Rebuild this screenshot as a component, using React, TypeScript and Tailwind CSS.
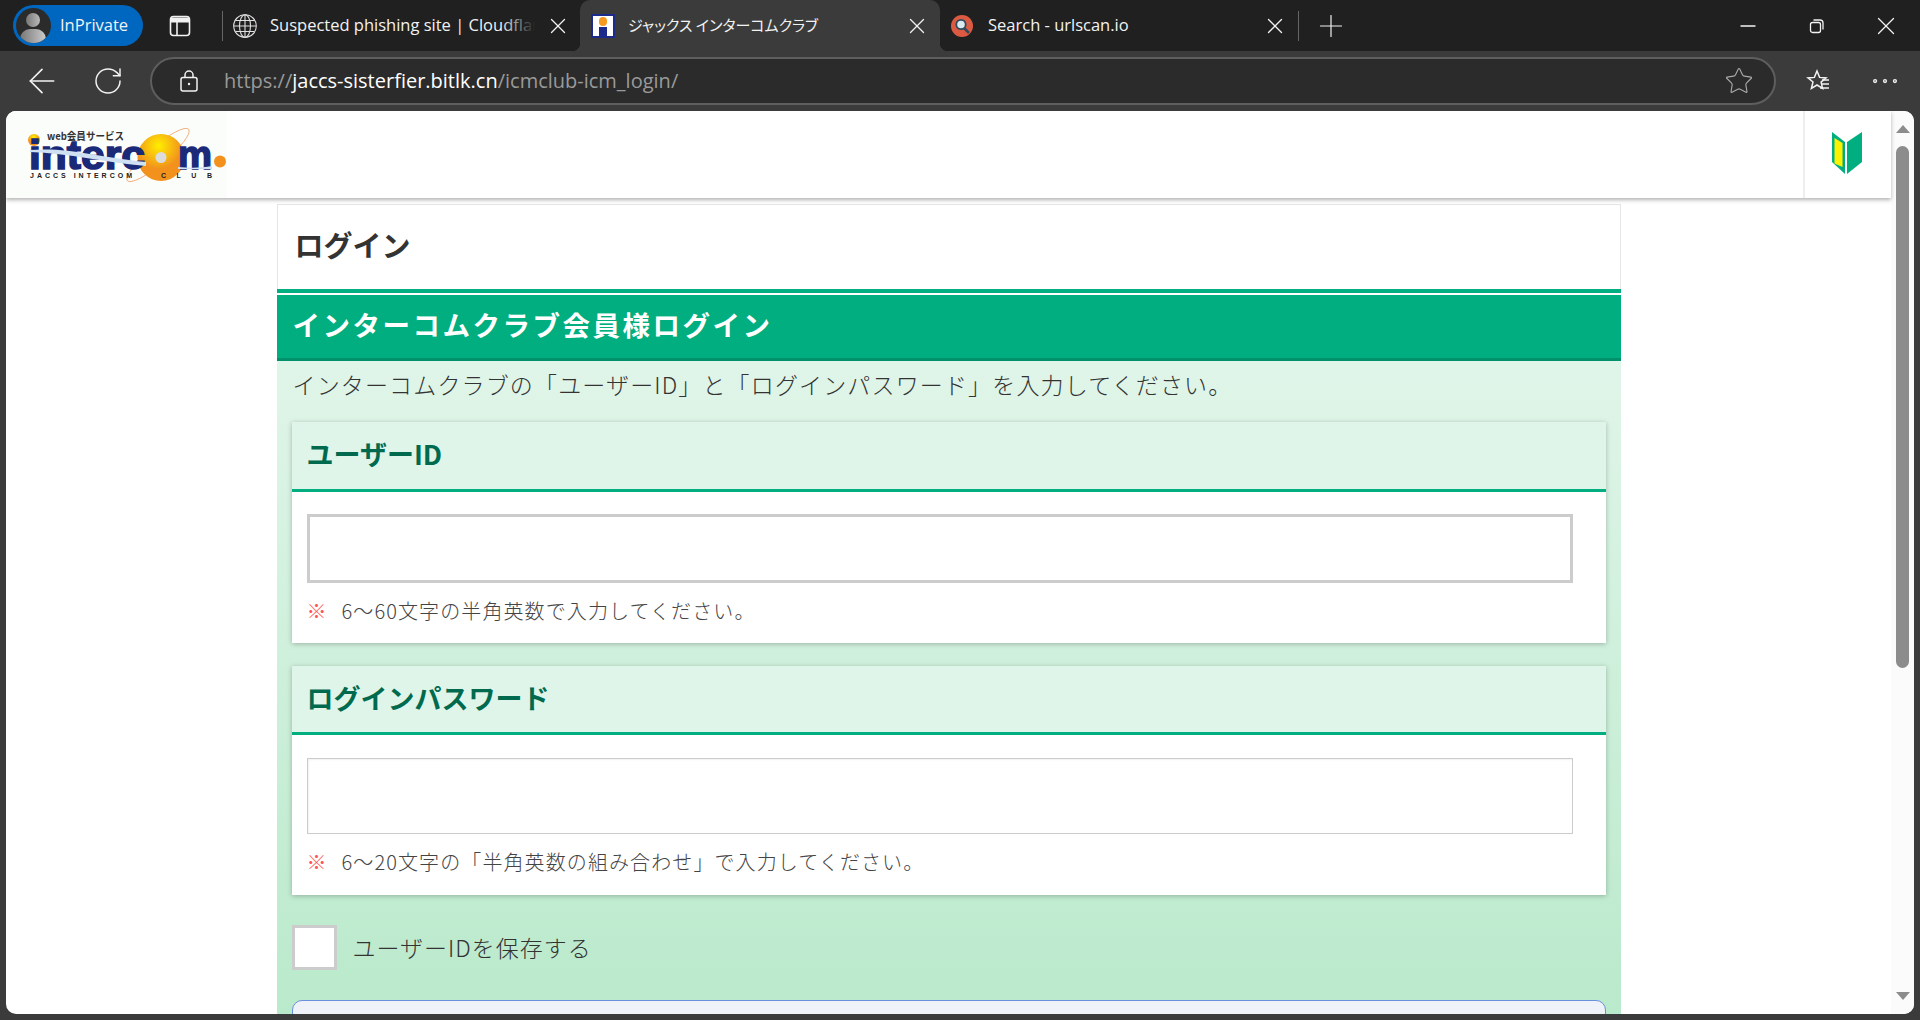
import { ArrowLeft, Ellipsis, Minus, Plus, RotateCw, Star, X } from 'lucide-react'

const cjk = 'font-["Noto_Sans_CJK_JP","Noto_Sans",sans-serif]'

function SidebarIcon() {
  return (
    <svg width="22" height="22" viewBox="0 0 22 22" fill="none" stroke="#f2f2f2" strokeWidth="1.6">
      <rect x="1.500" y="1.500" width="19" height="19" rx="3" />
      <path d="M2 5h18" strokeWidth="5" />
      <path d="M8 7v13" />
    </svg>
  )
}

function GlobeIcon() {
  return (
    <svg width="24" height="24" viewBox="0 0 24 24" fill="none" stroke="#e0e0e0" strokeWidth="1.100">
      <circle cx="12" cy="12" r="11.300" />
      <ellipse cx="12" cy="12" rx="5.500" ry="11.300" />
      <path d="M12 1v22M1 12h22M2.500 6.500h19M2.500 17.500h19" />
    </svg>
  )
}

function LockIcon() {
  return (
    <svg width="18" height="22" viewBox="0 0 18 22" fill="none" stroke="#f2f2f2" strokeWidth="1.500">
      <rect x="1" y="7.500" width="16" height="13.500" rx="2" />
      <path d="M5 7.500V5a4 4 0 0 1 8 0v2.500" />
      <circle cx="9" cy="14" r="1.200" fill="#f2f2f2" stroke="none" />
    </svg>
  )
}

function RestoreIcon() {
  return (
    <svg width="16" height="16" viewBox="0 0 16 16" fill="none" stroke="#f2f2f2" strokeWidth="1.3">
      <rect x="1.500" y="4.500" width="10" height="10" rx="2" />
      <path d="M4.500 2h6.500a3 3 0 0 1 3 3v6.500" />
    </svg>
  )
}

function FavoritesIcon() {
  return (
    <svg width="26" height="26" viewBox="0 0 26 26" fill="none" stroke="#f2f2f2" strokeWidth="1.5">
      <path d="M12 3l2.600 6.400 6.400.5-4.900 4.200 1.500 6.400L12 17l-5.600 3.500L8 14 3 9.900l6.400-.5z" />
      <path d="M17 12h7M17 16h7M15 20h9" />
    </svg>
  )
}

function CloseIcon() {
  return <X size={26} strokeWidth={1.2} className="shrink-0" />
}

function TabFavicon() {
  return (
    <div className="flex h-[24px] w-[24px] flex-col items-center border-2 border-[#1c2a8c] bg-white">
      <div className="mt-[1px] h-[9px] w-[8px] rounded-full bg-[#f59a1e]" />
      <div className="mt-auto h-[9px] w-[8px] bg-[#1c2a8c]" />
    </div>
  )
}

function UrlscanFavicon() {
  return (
    <svg width="22" height="22" viewBox="0 0 22 22">
      <circle cx="11" cy="11" r="11" fill="#dc5a42" />
      <path d="M13 13l5 5" stroke="#2f4a5c" strokeWidth="2.500" />
      <circle cx="10" cy="9.500" r="4.700" fill="#dce8ef" stroke="#2f4a5c" strokeWidth="1.800" />
    </svg>
  )
}

function Logo() {
  return (
    <svg width="204" height="62" viewBox="0 0 204 62" className="shrink-0">
      <defs>
        <radialGradient id="ball" cx="0.45" cy="0.25" r="0.7">
          <stop offset="0" stopColor="#ffee00" />
          <stop offset="0.7" stopColor="#f2921d" />
        </radialGradient>
      </defs>
      <circle cx="6" cy="15" r="6" fill="url(#ball)" />
      <text x="19" y="14.500" fontSize="10.500" fontWeight="700" fill="#333" fontFamily="Noto Sans CJK JP" textLength="77" lengthAdjust="spacingAndGlyphs">
        web会員サービス
      </text>
      <ellipse cx="130" cy="30" rx="40" ry="9" fill="none" stroke="#f2a36b" strokeWidth="0.8" transform="rotate(-40 130 30)" />
      <circle cx="133" cy="32.500" r="23.500" fill="url(#ball)" />
      <circle cx="133" cy="32.500" r="5.500" fill="#dcdcdc" />
      <text x="1" y="44" fontSize="40" fontWeight="700" fill="#1b2a78" stroke="#1b2a78" strokeWidth="1.600" fontFamily="Liberation Sans" textLength="116" lengthAdjust="spacingAndGlyphs">
        interc
      </text>
      <text x="150" y="44" fontSize="40" fontWeight="700" fill="#1b2a78" stroke="#1b2a78" strokeWidth="1.600" fontFamily="Liberation Sans" textLength="34" lengthAdjust="spacingAndGlyphs">
        m
      </text>
      <path d="M2 25C40 22 70 32 118 37L118 41C80 38 40 28 2 27z" fill="#cfe0f2" />
      <path d="M150 42c12 1 24 1 34-1v3h-34z" fill="#cfe0f2" />
      <circle cx="192" cy="36.500" r="6" fill="#f2921d" />
      <text x="2" y="52.500" fontSize="7" fontWeight="700" fill="#222" fontFamily="Liberation Sans" textLength="102" lengthAdjust="spacing">
        JACCS INTERCOM
      </text>
      <text x="133" y="52.500" fontSize="7" fontWeight="700" fill="#222" fontFamily="Liberation Sans" textLength="51" lengthAdjust="spacing">
        CLUB
      </text>
    </svg>
  )
}

function BeginnerMark() {
  return (
    <svg width="30" height="42" viewBox="0 0 30 42">
      <path d="M0 0l13 10v32L0 30z" fill="#00ae7f" />
      <path d="M2.500 6l8 5v24l-8-3.500z" fill="#fff200" />
      <path d="M15 10L30 0v30l-15 12z" fill="#00ae7f" />
    </svg>
  )
}

function Note({ text }: { text: string }) {
  return (
    <p className="flex items-center gap-[15px] text-[20px] leading-[28px] font-light text-[#444]">
      <span className="text-[#f55]">※</span>
      <span className="tracking-[1.100px]">{text}</span>
    </p>
  )
}

function FieldCard({ title, headerHeight, children }: { title: string; headerHeight: string; children: React.ReactNode }) {
  return (
    <section className="bg-white shadow-[0_1px_5px_rgba(0,0,0,0.25)]">
      <h2 className={`flex ${headerHeight} items-center border-b-[3px] border-[#00ae7f] bg-[#e0f5e9] px-[15px] pb-[2px] text-[27px] font-bold text-[#006a4e]`}>
        {title}
      </h2>
      {children}
    </section>
  )
}

export default function App() {
  return (
    <div className={`flex h-screen flex-col overflow-hidden bg-[#3b3b3b] ${cjk}`}>
      {/* tab strip */}
      <div className='flex h-[51px] items-stretch bg-[#202020] font-["Open_Sans",sans-serif] text-[16.500px] text-[#f2f2f2]'>
        <div className="ml-[13px] mt-[5px] flex h-[41px] w-[130px] items-center rounded-full bg-[#0067c0] pl-[3px]">
          <div className="relative h-[35px] w-[35px] overflow-hidden rounded-full bg-[#2b2b2b]">
            <div className="absolute left-[10px] top-[5px] h-[14px] w-[14px] rounded-full bg-gradient-to-r from-[#777] to-[#bbb]" />
            <div className="absolute left-[4px] top-[21px] h-[20px] w-[26px] rounded-full bg-gradient-to-r from-[#777] to-[#ccc]" />
          </div>
          <span className="ml-[9px] text-[16.500px]">InPrivate</span>
        </div>
        <div className="ml-[26px] flex items-center">
          <SidebarIcon />
        </div>
        <div className="ml-[31px] mt-[11px] h-[30px] w-px bg-[#666]" />
        <div className="ml-[10px] flex w-[347px] items-center">
          <GlobeIcon />
          <div className="relative ml-[13px] w-[265px] overflow-hidden whitespace-nowrap">
            Suspected phishing site | Cloudflare
            <div className="absolute inset-y-0 right-0 w-[34px] bg-gradient-to-r from-transparent to-[#202020]" />
          </div>
          <div className="ml-[10px]">
            <CloseIcon />
          </div>
        </div>
        <div className="relative flex w-[360px] items-center rounded-t-[10px] bg-[#3b3b3b] pl-[11px]">
          <div className="absolute bottom-0 left-[-8px] h-[8px] w-[8px] bg-[radial-gradient(circle_at_0_0,#202020_8px,#3b3b3b_8.500px)]" />
          <div className="absolute bottom-0 right-[-8px] h-[8px] w-[8px] bg-[radial-gradient(circle_at_100%_0,#202020_8px,#3b3b3b_8.500px)]" />
          <TabFavicon />
          <span className={`ml-[13px] w-[276px] text-[15px] [font-feature-settings:"palt"] ${cjk}`}>ジャックス インターコムクラブ</span>
          <CloseIcon />
        </div>
        <div className="flex w-[358px] items-center pl-[11px]">
          <UrlscanFavicon />
          <span className="ml-[15px] w-[274px]">Search - urlscan.io</span>
          <CloseIcon />
        </div>
        <div className="mt-[11px] h-[30px] w-px bg-[#666]" />
        <div className="ml-[14px] flex items-center">
          <Plus size={36} strokeWidth={0.8} />
        </div>
        <div className="ml-auto flex items-center">
          <div className="flex w-[69px] justify-center">
            <Minus size={24} strokeWidth={1.4} />
          </div>
          <div className="flex w-[69px] justify-center">
            <RestoreIcon />
          </div>
          <div className="flex w-[69px] justify-center">
            <X size={30} strokeWidth={1} />
          </div>
        </div>
      </div>

      {/* toolbar */}
      <div className="flex h-[60px] items-center text-[#f2f2f2]">
        <ArrowLeft size={40} strokeWidth={1} className="ml-[22px]" />
        <RotateCw size={32} strokeWidth={1.1} className="ml-[30px]" />
        <div className="ml-[26px] flex h-[48px] w-[1626px] items-center rounded-full border-2 border-[#5e5e5e] bg-[#2b2b2b] pl-[28px] pr-[20px]">
          <LockIcon />
          <div className='ml-[26px] font-["Open_Sans",sans-serif] text-[20px] text-[#9a9a9a]'>
            https://<span className="text-white">jaccs-sisterfier.bitlk.cn</span>/icmclub-icm_login/
          </div>
          <Star size={30} strokeWidth={0.9} className="ml-auto text-[#aaa]" />
        </div>
        <div className="ml-[29px]">
          <FavoritesIcon />
        </div>
        <Ellipsis size={34} strokeWidth={1} className="ml-[37px]" />
      </div>

      {/* page */}
      <div className="mx-[6px] mb-[6px] flex min-h-0 flex-1 overflow-hidden rounded-[10px] bg-white">
        <div className="flex min-w-0 flex-1 flex-col">
          <header className="relative z-10 flex h-[87px] shrink-0 items-center justify-between bg-white shadow-[0_2px_4px_rgba(0,0,0,0.3)]">
            <div className="flex h-[87px] w-[221px] items-center bg-[#fbfdfb] pl-[22px] pt-[2px]">
              <Logo />
            </div>
            <div className="flex h-[87px] w-[88px] items-center justify-center border-l-2 border-[#eee] pb-[3px] pr-[2px]">
              <BeginnerMark />
            </div>
          </header>

          <main className="mx-auto mt-[6px] w-[1344px] flex-1">
            <div className="flex h-[85px] items-center border border-b-0 border-[#e5e5e5] pb-[5px] pl-[17px]">
              <h1 className="text-[29px] font-bold text-[#333]">ログイン</h1>
            </div>
            <div className="h-[4px] bg-[#00ae7f]" />
            <div className="mt-[2px] flex h-[66px] items-center border-b-[3px] border-[#00906a] bg-[#00ae7f] pb-[4px] pl-[16px] text-[27.500px] font-bold tracking-[2.500px] text-white">
              インターコムクラブ会員様ログイン
            </div>
            <div className="h-[680px] bg-gradient-to-b from-[#e0f5e9] to-[#b8e9ca] px-[15px]">
              <p className="flex h-[61px] items-center pb-[14px] pl-[1px] text-[23px] font-light tracking-[1.150px] text-[#333]">
                インターコムクラブの「ユーザーID」と「ログインパスワード」を入力してください。
              </p>
              <FieldCard title="ユーザーID" headerHeight="h-[70px]">
                <div className="px-[15px] pb-[18px] pt-[22px]">
                  <div className="h-[69px] w-[1266px] border-[3px] border-[#ccc] bg-white" />
                  <div className="mt-[14px]">
                    <Note text="6〜60文字の半角英数で入力してください。" />
                  </div>
                </div>
              </FieldCard>
              <div className="mt-[23px]">
                <FieldCard title="ログインパスワード" headerHeight="h-[69px]">
                  <div className="px-[15px] pb-[19px] pt-[23px]">
                    <div className="h-[76px] w-[1266px] border border-[#ccc] bg-white shadow-[inset_1px_1px_2px_rgba(0,0,0,0.06)]" />
                    <div className="mt-[14px]">
                      <Note text="6〜20文字の「半角英数の組み合わせ」で入力してください。" />
                    </div>
                  </div>
                </FieldCard>
              </div>
              <label className="mt-[30px] flex items-center gap-[16px] text-[23px] font-light tracking-[1px] text-[#333]">
                <span className="h-[45px] w-[45px] border-[3px] border-[#ccc] bg-white" />
                ユーザーIDを保存する
              </label>
              <div className="mt-[30px] h-[60px] rounded-t-[10px] border border-[#6a8fdc] bg-[#eff2f9]" />
            </div>
          </main>
        </div>

        {/* scrollbar */}
        <div className="flex w-[23px] shrink-0 flex-col items-center bg-[#fbfbfb]">
          <div className="mt-[14px] h-0 w-0 border-x-[7px] border-b-[8px] border-x-transparent border-b-[#8c8c8c]" />
          <div className="mt-[13px] h-[522px] w-[13px] rounded-full bg-[#8c8c8c]" />
          <div className="mb-[14px] mt-auto h-0 w-0 border-x-[7px] border-t-[8px] border-x-transparent border-t-[#8c8c8c]" />
        </div>
      </div>
    </div>
  )
}
